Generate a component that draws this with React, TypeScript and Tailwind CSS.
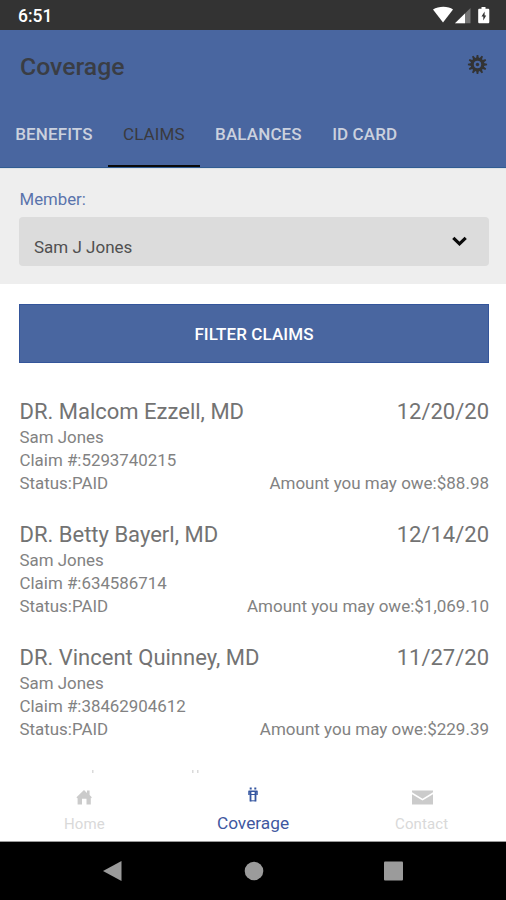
import type { ReactNode } from 'react';

type Claim = {
  provider: string;
  date: string;
  patient: string;
  number: string;
  status: string;
  amount: string;
};

const tabs = ['BENEFITS', 'CLAIMS', 'BALANCES', 'ID CARD'];

const claims: Claim[] = [
  {
    provider: 'DR. Malcom Ezzell, MD',
    date: '12/20/20',
    patient: 'Sam Jones',
    number: '5293740215',
    status: 'PAID',
    amount: '$88.98',
  },
  {
    provider: 'DR. Betty Bayerl, MD',
    date: '12/14/20',
    patient: 'Sam Jones',
    number: '634586714',
    status: 'PAID',
    amount: '$1,069.10',
  },
  {
    provider: 'DR. Vincent Quinney, MD',
    date: '11/27/20',
    patient: 'Sam Jones',
    number: '38462904612',
    status: 'PAID',
    amount: '$229.39',
  },
];

export default function App() {
  return (
    <div className="flex h-[900px] w-[506px] flex-col overflow-hidden bg-white font-['Roboto',sans-serif]">
      <StatusBar />
      <Header />

      <section className="h-[116px] shrink-0 border-t border-[#dfe2e6] bg-[#eeeeee] pt-[19px] pr-[17px] pl-[19px]">
        <div className="pl-[0.5px] text-[16.8px] leading-[22px] text-[#5a74ac]">
          Member:
        </div>
        <div className="mt-[7px] flex h-[49px] items-center justify-between rounded-[4px] bg-[#dcdcdc] pr-[22px] pl-[15px]">
          <span className="pt-[10px] text-[17px] leading-[22px] text-[#505050]">
            Sam J Jones
          </span>
          <svg width="15" height="10" viewBox="0 0 15 10" fill="none" className="-mt-[2px]">
            <path d="M1.300 1.800 7.500 7.800l6.200-6" stroke="#0a0a0a" strokeWidth="3.200" />
          </svg>
        </div>
      </section>

      <main className="h-[489px] shrink-0 overflow-hidden pt-5 pr-[17px] pl-[19px]">
        <button className="flex h-[59px] w-full items-center justify-center border border-[#34559a] bg-[#4966a0] pt-[2px] text-[17px] font-medium tracking-[0.1px] text-white">
          FILTER CLAIMS
        </button>
        <div className="mt-[34px]">
          {claims.map((claim) => (
            <ClaimRow key={claim.number} claim={claim} />
          ))}
          <NextClaimEdge />
        </div>
      </main>

      <BottomNav />
      <SystemNav />
    </div>
  );
}

function StatusBar() {
  return (
    <div className="flex h-[30px] shrink-0 items-center justify-between bg-[#333333] pr-[15px] pl-[18px]">
      <span className="pt-[2px] text-[17.5px] font-medium text-white">6:51</span>
      <svg width="60" height="20" viewBox="0 0 60 20">
        <path d="M2 4.400C7.500.8 17.500.8 22 4.400L12 17.500z" fill="#ffffff" />
        <path d="M39.500 3v15.200h-15.500z" fill="#757575" />
        <path d="M34 8.500v9.700h-10z" fill="#ffffff" />
        <path
          d="M50.500 2h4v1.800H57c.8 0 1.300.5 1.300 1.300v11.800c0 .8-.5 1.300-1.300 1.300h-8.500c-.8 0-1.300-.5-1.300-1.300V5.100c0-.8.5-1.300 1.300-1.300h2z"
          fill="#ffffff"
        />
        <path d="M53.600 6.500 50.500 11.500h1.800v4l2.900-5.100h-1.600z" fill="#333333" />
      </svg>
    </div>
  );
}

function Header() {
  return (
    <header className="flex h-[138px] shrink-0 flex-col border-b border-[#305c92] bg-[#4966a0]">
      <div className="flex h-[72px] items-center justify-between pr-[18px] pl-[20px]">
        <h1 className="pt-px text-[24.800px] leading-[30px] font-medium text-[#3a3d44]">
          Coverage
        </h1>
        <GearIcon />
      </div>
      <nav className="flex h-[65px]">
        {tabs.map((tab) => {
          const active = tab === 'CLAIMS';
          return (
            <div
              key={tab}
              className={`flex items-center border-b-2 px-[15.2px] pt-[2px] text-[17px] tracking-[0.12px] ${
                active
                  ? 'border-[#0a0a0a] font-normal text-[#3a3a3e]'
                  : 'border-transparent font-medium text-[#cbd1de]'
              }`}
            >
              {tab}
            </div>
          );
        })}
      </nav>
    </header>
  );
}

function GearIcon() {
  const teeth = [0, 30, 60, 90, 120, 150, 180, 210, 240, 270, 300, 330];

  return (
    <svg width="21" height="21" viewBox="0 0 21 21" fill="none" className="-mt-[4px]">
      {teeth.map((angle) => (
        <path
          key={angle}
          d="M9.100 4.500 9.700.9h1.600l.6 3.600z"
          fill="#333333"
          transform={`rotate(${angle} 10.5 10.5)`}
        />
      ))}
      <circle cx="10.500" cy="10.500" r="5.300" stroke="#333333" strokeWidth="3.200" />
      <circle cx="10.500" cy="10.500" r="1.700" fill="#333333" />
    </svg>
  );
}

function ClaimRow({ claim }: { claim: Claim }) {
  return (
    <article className="h-[123.2px] text-[16.9px] leading-[23px] text-[#828282]">
      <div className="flex justify-between text-[22px] leading-[30px] text-[#737373]">
        <span className="pl-[0.5px]">{claim.provider}</span>
        <span>{claim.date}</span>
      </div>
      <div className="-mt-px pl-[0.5px]">{claim.patient}</div>
      <div className="pl-[0.5px]">Claim #:{claim.number}</div>
      <div className="flex justify-between pl-[0.5px]">
        <span>Status:{claim.status}</span>
        <span className="text-[17px]">Amount you may owe:{claim.amount}</span>
      </div>
    </article>
  );
}

// Only the ascender tips of the next claim clear the bottom bar.
function NextClaimEdge() {
  return (
    <svg width="200" height="4" viewBox="0 0 200 4" className="mt-[3px]" fill="#dadada">
      <rect x="73" y="0" width="1.500" height="4" />
      <rect x="173" y="0" width="1.500" height="4" />
      <rect x="178" y="0" width="1.500" height="4" />
    </svg>
  );
}

function BottomNav() {
  return (
    <footer className="grid h-[69px] shrink-0 grid-cols-3 border-b border-[#9a9a9a] bg-white">
      <NavItem label="Home">
        <svg width="18" height="16" viewBox="0 0 18 16">
          <path
            d="M1.500 8.300 9 1l3 2.900V1.500h2.600V6L16.800 8.300l-.6 1-.4-.3v6.500h-4.300V9.800H7v5.700H2.600V9l-.5.3z"
            fill="#cbcbcb"
          />
        </svg>
      </NavItem>
      <NavItem label="Coverage" active>
        <svg width="12" height="16" viewBox="0 0 12 16" fill="none" stroke="#3556a0">
          <path d="M2.700 1.400h2M7.300 1.400h2" strokeWidth="2" />
          <path d="M1.500 4.300h9M2 4v4M10 4v4" strokeWidth="1.500" />
          <path d="M3.500 4v10.500M8.500 4v10.500" strokeWidth="1.800" />
          <path d="M3.500 7.500h5M3.500 13.800h5" strokeWidth="1" />
        </svg>
      </NavItem>
      <NavItem label="Contact">
        <svg width="21" height="15" viewBox="0 0 21 15" fill="#cbcbcb" className="ml-[2px]">
          <path d="M0 .5h21v1.700L10.500 8.700 0 2.200z" />
          <path d="M0 4.300l10.500 6.300L21 4.300v10.200H0z" />
        </svg>
      </NavItem>
    </footer>
  );
}

function NavItem({
  label,
  active = false,
  children,
}: {
  label: string;
  active?: boolean;
  children: ReactNode;
}) {
  return (
    <div className="flex flex-col items-center">
      <div className={`flex h-[16px] items-center ${active ? 'mt-[14px]' : 'mt-[16px]'}`}>
        {children}
      </div>
      <div
        className={
          active
            ? 'mt-[9px] text-[17.3px] leading-[22px] text-[#3f58a0]'
            : 'mt-[9px] text-[15px] leading-[20px] tracking-[0.1px] text-[#d9d9d9]'
        }
      >
        {label}
      </div>
    </div>
  );
}

function SystemNav() {
  return (
    <div className="flex h-[58px] shrink-0 items-center bg-black pl-[103px]">
      <svg width="300" height="22" viewBox="0 0 300 22" fill="#9b9b9b">
        <path d="M18.500 1v20L0 11z" />
        <circle cx="151" cy="11" r="9.300" />
        <rect x="281" y="1.500" width="19" height="19" rx="1" />
      </svg>
    </div>
  );
}
